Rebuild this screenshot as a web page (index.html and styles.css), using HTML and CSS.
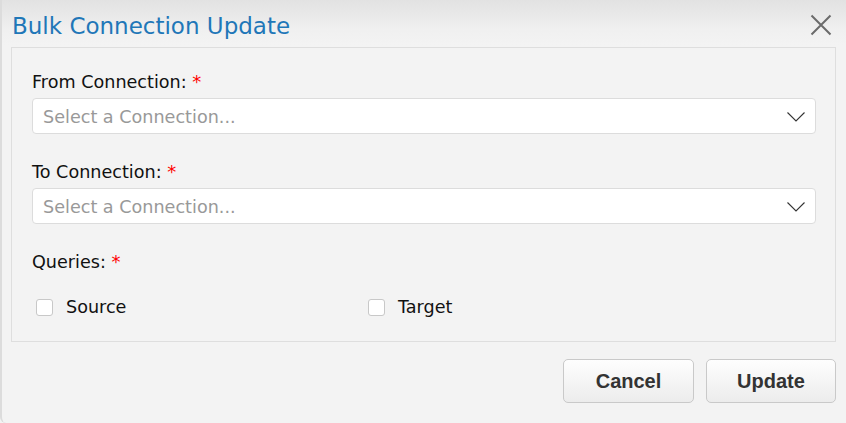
FILE: index.html
```html
<!DOCTYPE html>
<html lang="en">
<head>
<meta charset="utf-8">
<title>Bulk Connection Update</title>
<link rel="stylesheet" href="styles.css">
</head>
<body>
<div class="dialog">
  <div class="dialog-header">
    <h1 class="dialog-title">Bulk Connection Update</h1>
    <button class="close-btn" aria-label="Close">
      <svg width="22" height="22" viewBox="0 0 22 22"><path d="M1.5 1.5 L20.5 20.5 M20.5 1.5 L1.5 20.5" stroke="#6b6b6b" stroke-width="2" fill="none"/></svg>
    </button>
  </div>
  <div class="panel">
    <div class="field">
      <label class="field-label">From Connection: <span class="req">*</span></label>
      <div class="select">
        <span class="placeholder">Select a Connection...</span>
        <svg class="chev" width="18" height="10" viewBox="0 0 18 10"><polyline points="0.5,0.5 9,9 17.5,0.5" fill="none" stroke="#333" stroke-width="1.1"/></svg>
      </div>
    </div>
    <div class="field">
      <label class="field-label">To Connection: <span class="req">*</span></label>
      <div class="select">
        <span class="placeholder">Select a Connection...</span>
        <svg class="chev" width="18" height="10" viewBox="0 0 18 10"><polyline points="0.5,0.5 9,9 17.5,0.5" fill="none" stroke="#333" stroke-width="1.1"/></svg>
      </div>
    </div>
    <div class="field">
      <label class="field-label">Queries: <span class="req">*</span></label>
    </div>
    <div class="checks">
      <label class="check"><span class="box"></span>Source</label>
      <label class="check"><span class="box"></span>Target</label>
    </div>
  </div>
  <div class="actions">
    <button class="btn">Cancel</button>
    <button class="btn">Update</button>
  </div>
</div>
</body>
</html>
```
FILE: styles.css
```css
html, body {
  margin: 0;
  padding: 0;
  background: #f3f3f3;
}
.dialog {
  width: 846px;
  height: 423px;
  box-sizing: border-box;
  background: #f3f3f3;
  border-left: 2px solid #dcdcdc;
  border-bottom-left-radius: 6px;
  font-family: "DejaVu Sans", sans-serif;
  color: #111;
  display: flex;
  flex-direction: column;
}
.dialog-header {
  height: 47px;
  background: linear-gradient(to bottom, #e2e2e2 0px, #f0f0f0 30px, #f3f3f3 45px);
  display: flex;
  align-items: flex-start;
  justify-content: space-between;
  padding: 0 14px 0 10px;
}
.dialog-title {
  margin: 0;
  padding-top: 11px;
  font-weight: normal;
  font-size: 23px;
  line-height: 30px;
  color: #1f77b8;
}
.close-btn {
  margin-top: 14px;
  padding: 0;
  border: 0;
  background: none;
  width: 22px;
  height: 22px;
}
.close-btn svg { display: block; }
.panel {
  margin: 0 10px 0 9px;
  border: 1px solid #dedede;
  padding: 23px 19px 22px 20px;
  background: #f3f3f3;
}
.field + .field { margin-top: 27px; }
.field-label {
  display: block;
  font-size: 17.6px;
  line-height: 22px;
  height: 22px;
  margin-bottom: 5px;
  color: #111;
}
.req { color: #f00; font-size: 18px; }
.select {
  height: 36px;
  box-sizing: border-box;
  background: #fff;
  border: 1px solid #dcdcdc;
  border-radius: 4px;
  display: flex;
  align-items: center;
  justify-content: space-between;
  padding: 0 10px 0 10px;
}
.placeholder {
  font-size: 17.6px;
  color: #999;
  margin-top: 2px;
}
.chev { display: block; margin-top: 2px; }
.checks {
  margin-top: 22px;
  display: grid;
  grid-template-columns: 332px 1fr;
  height: 24px;
}
.check {
  display: flex;
  align-items: center;
  font-size: 17.6px;
  color: #111;
  padding-left: 4px;
}
.box {
  width: 17px;
  height: 17px;
  box-sizing: border-box;
  background: #fff;
  border: 1px solid #c8c8c8;
  border-radius: 3px;
  margin-right: 13px;
}
.actions {
  display: flex;
  justify-content: flex-end;
  gap: 12px;
  padding: 17px 10px 0 0;
}
.btn {
  width: 131px;
  height: 44px;
  border: 1px solid #c9c9c9;
  border-radius: 5px;
  background: linear-gradient(to bottom, #fefefe, #ececec);
  font-family: "Liberation Sans", Arial, sans-serif;
  font-weight: bold;
  font-size: 20px;
  color: #333;
  padding: 0;
}
.btn + .btn { width: 130px; }
```
